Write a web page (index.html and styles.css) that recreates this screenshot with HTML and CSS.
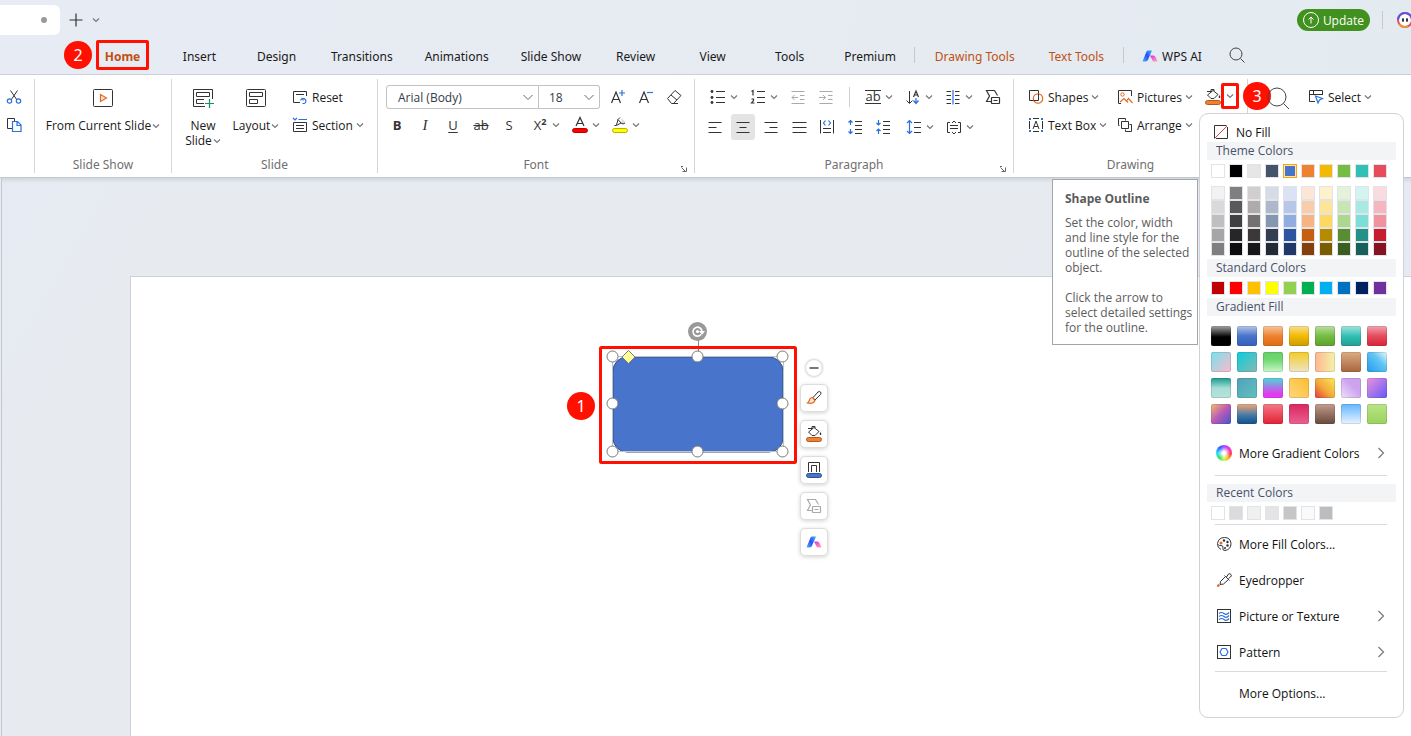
FILE: index.html
```
<!DOCTYPE html>
<html lang="en">
<head>
<meta charset="utf-8">
<title>Presentation editor</title>
<link rel="stylesheet" href="styles.css">
</head>
<body>
<svg class="defs" aria-hidden="true">
  <defs>
    <linearGradient id="g-blue" x1="0" y1="1" x2="1" y2="0"><stop offset="0" stop-color="#3fb4ff"/><stop offset=".5" stop-color="#2b50f5"/><stop offset="1" stop-color="#3ab8f0"/></linearGradient>
    <linearGradient id="g-pink" x1="0" y1="0" x2="1" y2="1"><stop offset="0" stop-color="#a03cf5"/><stop offset=".5" stop-color="#f56ad0"/><stop offset="1" stop-color="#ffb07a"/></linearGradient>
    <symbol id="chev" viewBox="0 0 8 8"><path d="M1 2.500l3 3 3-3" fill="none" stroke="#777" stroke-width="1.200"/></symbol>
    <symbol id="right" viewBox="0 0 8 14"><path d="M1.500 2l5 5-5 5" fill="none" stroke="#777" stroke-width="1.200"/></symbol>
    <symbol id="ai" viewBox="0 0 16 12"><path d="M4.500 1.500Q5 .5 6.200.5H10L6.500 8.500Q6 11.500 3 11.500H.5z" fill="url(#g-blue)"/><path d="M8 5.500h3.500Q13 5.500 13.800 7.500L15.500 11.500h-3.500Q10.500 11.500 10 9.500z" fill="url(#g-pink)"/></symbol>
    <symbol id="bucket" viewBox="0 0 18 18"><path d="M3 3.500H8M3.500 7L9 2.500 14 6.500 10 10.500H7zM7 3V1.500h3V3" fill="none" stroke="#333"/><path d="M15.500 7q1.500 2 .5 3h-1q-1-1 .5-3z" fill="#333"/><rect x="1.500" y="12.500" width="15" height="4" rx="2" fill="#ee8230" stroke="#b5591a"/></symbol>
    <symbol id="cvt" viewBox="0 0 16 16"><path d="M7 12.500H1.500L4.500 7 1.500 1.500h8l3 5" fill="none" stroke="currentColor" stroke-width="1.200"/><rect x="6.500" y="8.500" width="8" height="6" rx=".5" fill="#fff" stroke="currentColor" stroke-width="1.200"/><path d="M8.500 11.500h4" stroke="currentColor"/></symbol>
    <symbol id="glass" viewBox="0 0 16 16"><circle cx="7" cy="7" r="6" fill="none" stroke="#444"/><path d="M11.500 11.500L15.500 15.500" stroke="#444"/></symbol>
    <symbol id="launch" viewBox="0 0 8 8"><path d="M1.500 2.500l4 4M6.500 2.500v4H2.500M1 1.500h2" fill="none" stroke="#666"/></symbol>
  </defs>
</svg>

<header class="titlebar">
  <div class="doc-tab"><span class="dirty"></span></div>
  <button class="tb-btn" aria-label="New tab"><svg width="14" height="14"><path d="M7 .5v13M.5 7h13" stroke="#333" stroke-width="1.200"/></svg></button>
  <button class="tb-btn" aria-label="Tab list"><svg width="8" height="8"><use href="#chev"/></svg></button>
  <div class="spacer"></div>
  <button class="update"><svg width="16" height="16" fill="none" stroke="#fff"><circle cx="8" cy="8" r="7.500"/><path d="M8 11.500v-6M5.500 7.500L8 5l2.500 2.500"/></svg>Update</button>
  <span class="tb-sep"></span>
  <div class="avatar"><svg width="18" height="18"><circle cx="9" cy="9" r="7" fill="#fff" stroke="#e84f63" stroke-width="2"/><path d="M2 9a7 7 0 0 1 14 0" fill="none" stroke="#5b55e6" stroke-width="2"/><path d="M3 13a7 7 0 0 0 9 2" fill="none" stroke="#e79a35" stroke-width="2"/><ellipse cx="7" cy="9" rx="1" ry="2" fill="#222"/><ellipse cx="11" cy="9" rx="1" ry="2" fill="#222"/></svg></div>
</header>

<nav class="tabs">
  <button class="tab active">Home<span class="mark-box"></span><span class="badge badge-two">2</span></button>
  <button class="tab">Insert</button>
  <button class="tab">Design</button>
  <button class="tab">Transitions</button>
  <button class="tab">Animations</button>
  <button class="tab">Slide Show</button>
  <button class="tab">Review</button>
  <button class="tab">View</button>
  <button class="tab">Tools</button>
  <button class="tab">Premium</button>
  <span class="tab-sep"></span>
  <button class="tab context">Drawing Tools</button>
  <button class="tab context">Text Tools</button>
  <span class="tab-sep"></span>
  <button class="ai-tab"><svg width="16" height="12"><use href="#ai"/></svg>WPS AI</button>
  <button class="search" aria-label="Search"><svg width="16" height="16"><use href="#glass"/></svg></button>
</nav>

<section class="ribbon">
  <div class="group g-clip">
    <button class="icon" aria-label="Cut"><svg width="16" height="16" fill="none" stroke="#333"><path d="M4.500 1.500L11 11M11.500 1.500L5 11"/><g stroke="#2b6fe0" stroke-width="1.200"><circle cx="3.500" cy="12" r="2.200"/><circle cx="12.500" cy="12" r="2.200"/></g></svg></button>
    <button class="icon" aria-label="Copy"><svg width="16" height="16" fill="none"><path d="M6 11.500H1.500v-10h7V4" stroke="#333"/><path d="M6.500 4.500h5l3.500 3.500v6.500H6.500zM11 4.500V8.500h4" stroke="#2b6fe0" stroke-width="1.200"/></svg></button>
  </div>

  <div class="group g-show">
    <button class="big"><span class="big-icon"><svg width="20" height="18" fill="none"><rect x=".5" y=".5" width="19" height="17" rx="1" stroke="#333"/><path d="M7.500 5.500v7l6-3.500z" fill="#fde3d2" stroke="#e36a22" stroke-width="1.200"/></svg></span><span class="big-text">From Current Slide<svg width="8" height="8"><use href="#chev"/></svg></span></button>
    <div class="group-name">Slide Show</div>
  </div>

  <div class="group g-slide">
    <div class="slide-tools">
      <button class="big big-new"><span class="big-icon"><svg width="22" height="18" fill="none" stroke="#333"><path d="M13 17.500H1.500V.5h19V10"/><path d="M4.500 3.500h13v4h-13zM12 10.500H4.500v4H12"/><path d="M17.500 10v9M13 14.500h9" stroke="#12906a" stroke-width="1.200"/></svg></span><span class="big-text">New<br>Slide<svg width="8" height="8"><use href="#chev"/></svg></span></button>
      <button class="big big-layout"><span class="big-icon"><svg width="20" height="18" fill="none" stroke="#333"><rect x=".5" y=".5" width="19" height="17" rx="1"/><path d="M3.500 3.500h13v4h-13zM3.500 10.500h8v4h-8z"/></svg></span><span class="big-text">Layout<svg width="8" height="8"><use href="#chev"/></svg></span></button>
      <div class="stack">
        <button class="labelled"><svg width="16" height="16" fill="none"><path d="M8 13.500H1.500v-11h13V7" stroke="#333"/><path d="M4 5.500h8" stroke="#333"/><path d="M8.500 11.500l1.500-2 1.500 2M10 10a2.500 2.500 0 1 1 2 4.500h-1.500" stroke="#2b6fe0" stroke-width="1.200"/></svg>Reset</button>
        <button class="labelled"><svg width="16" height="16" fill="none"><path d="M1 1l2 2 2-2M6.500 2.500H15" stroke="#2b6fe0" stroke-width="1.200"/><path d="M1.500 5.500h13v9h-13zM4 8.500h8M4 11.500h8" stroke="#333"/></svg>Section<svg class="drop" width="8" height="8"><use href="#chev"/></svg></button>
      </div>
    </div>
    <div class="group-name">Slide</div>
  </div>

  <div class="group g-font">
    <div class="row row-combo">
      <div class="combo"><select class="font-name" aria-label="Font"><option>Arial (Body)</option></select><svg width="12" height="12" fill="none"><path d="M1.500 4L6 8.500 10.500 4" stroke="#666"/></svg></div>
      <div class="combo combo-size"><select class="font-size" aria-label="Font size"><option>18</option></select><svg width="12" height="12" fill="none"><path d="M1.500 4L6 8.500 10.500 4" stroke="#666"/></svg></div>
      <button class="icon icon-first" aria-label="Increase font size"><svg width="16" height="16" fill="none"><path d="M1.500 14L6 3l4.500 11M3 10.500h6" stroke="#333" stroke-width="1.200"/><path d="M12 1v6M9 4h6" stroke="#2b6fe0" stroke-width="1.200"/></svg></button>
      <button class="icon" aria-label="Decrease font size"><svg width="16" height="16" fill="none"><path d="M1.500 14L6 3l4.500 11M3 10.500h6" stroke="#333" stroke-width="1.200"/><path d="M9 3.500h6" stroke="#2b6fe0" stroke-width="1.200"/></svg></button>
      <button class="icon" aria-label="Clear formatting"><svg width="16" height="16" fill="none" stroke="#333"><path d="M1.500 9.500l7.500-8 6 5-7.500 8h-2zM5 6l6 5M7 14.500h5"/></svg></button>
    </div>
    <div class="row row-text">
      <button class="icon letter bold">B</button>
      <button class="icon letter italic">I</button>
      <button class="icon letter under">U</button>
      <button class="icon letter strike">ab</button>
      <button class="icon letter">S</button>
      <button class="split gap-left" aria-label="Superscript"><span class="letter">X<sup>2</sup></span><svg class="drop" width="8" height="8"><use href="#chev"/></svg></button>
      <button class="split" aria-label="Font colour"><svg width="16" height="18" fill="none"><path d="M4 10L8 1.500 12 10M5.500 7.500h5" stroke="#333" stroke-width="1.200"/><rect x=".5" y="12.500" width="15" height="4" rx="2" fill="#f00" stroke="#b00"/></svg><svg class="drop" width="8" height="8"><use href="#chev"/></svg></button>
      <button class="split" aria-label="Highlight"><svg width="16" height="18" fill="none"><path d="M9 1.500l4.500 5L10 8z" fill="#ddd"/><path d="M2.500 9.500h2L9 7 6 3.500 4.500 9M6 3.500L8 1.500M9 7l2 1 2-1" stroke="#333"/><rect x=".5" y="12.500" width="15" height="4" rx="2" fill="#ff0" stroke="#b5b500"/></svg><svg class="drop" width="8" height="8"><use href="#chev"/></svg></button>
    </div>
    <div class="group-name">Font</div>
    <button class="launcher" aria-label="Font settings"><svg width="8" height="8"><use href="#launch"/></svg></button>
  </div>

  <div class="group g-para">
    <div class="row">
      <button class="split" aria-label="Bullets"><svg width="16" height="16"><path d="M6 2.500h9M6 8.500h9M6 13.500h9" stroke="#333"/><g fill="#333"><circle cx="2" cy="2.500" r="1.400"/><circle cx="2" cy="8.500" r="1.400"/><circle cx="2" cy="13.500" r="1.400"/></g></svg><svg class="drop" width="8" height="8"><use href="#chev"/></svg></button>
      <button class="split" aria-label="Numbering"><svg width="16" height="16" fill="none" stroke="#333"><path d="M7 2.500h8M7 8.500h8M7 13.500h8"/><path d="M1.500 2.500L3 1.500v5M1.500 10h2v1.500L1.500 14H4.500" stroke-width="1.200"/></svg><svg class="drop" width="8" height="8"><use href="#chev"/></svg></button>
      <button class="icon" aria-label="Decrease indent"><svg width="16" height="16" fill="none" stroke="#aaa"><path d="M1.500 2.500h13M10 6.500h4.500M10 10.500h4.500M1.500 14.500h13M8 8.500H2M4.500 6L2 8.500 4.500 11"/></svg></button>
      <button class="icon" aria-label="Increase indent"><svg width="16" height="16" fill="none" stroke="#aaa"><path d="M1.500 2.500h13M10 6.500h4.500M10 10.500h4.500M1.500 14.500h13M1 8.500h6.500M5 6l2.500 2.500L5 11"/></svg></button>
      <span class="row-sep"></span>
      <button class="split" aria-label="Text direction"><span class="letter over">ab</span><svg class="drop" width="8" height="8"><use href="#chev"/></svg></button>
      <button class="split" aria-label="Sort"><svg width="16" height="16" fill="none"><path d="M4.500 2v12M1.500 11.500l3 3 3-3" stroke="#333"/><path d="M8.500 8l2.500-6 2.500 6M9.500 6h3" stroke="#333" stroke-width="1.200"/><path d="M11 9v5M8.500 11.500l2.500 3 2.500-3" stroke="#2b6fe0" stroke-width="1.200"/></svg><svg class="drop" width="8" height="8"><use href="#chev"/></svg></button>
      <button class="split" aria-label="Columns"><svg width="16" height="16" fill="none"><path d="M1.500 2.500h4.500M1.500 6.500h4.500M1.500 10.500h4.500M1.500 14.500h4.500M10 2.500h4.500M10 6.500h4.500M10 10.500h4.500M10 14.500h4.500" stroke="#333"/><path d="M8 1v14.500" stroke="#2b6fe0" stroke-width="1.200"/></svg><svg class="drop" width="8" height="8"><use href="#chev"/></svg></button>
      <button class="icon" aria-label="Convert to diagram"><svg width="16" height="16"><use href="#cvt"/></svg></button>
    </div>
    <div class="row row-align">
      <button class="icon" aria-label="Align left"><svg width="16" height="16"><path d="M1.500 3.500h13M1.500 8.500h8M1.500 13.500h13" stroke="#333"/></svg></button>
      <button class="icon selected" aria-label="Align center"><svg width="16" height="16"><path d="M1.500 3.500h13M4.500 8.500h7M1.500 13.500h13" stroke="#333"/></svg></button>
      <button class="icon" aria-label="Align right"><svg width="16" height="16"><path d="M1.500 3.500h13M6.500 8.500h8M1.500 13.500h13" stroke="#333"/></svg></button>
      <button class="icon" aria-label="Justify"><svg width="16" height="16"><path d="M1.500 3.500h14M1.500 8.500h14M1.500 13.500h14" stroke="#333"/></svg></button>
      <button class="icon" aria-label="Distribute"><svg width="16" height="16" fill="none"><path d="M1.500 1v13.500M14.500 1v13.500M4 9.500h8M4 13.500h8" stroke="#333"/><path d="M6.500 1.500L4.500 4l2 2.500M9.500 1.500l2 2.500-2 2.500" stroke="#2b6fe0" stroke-width="1.200"/></svg></button>
      <button class="icon" aria-label="Increase paragraph spacing"><svg width="16" height="16" fill="none"><path d="M8 2.500h7M8 6.500h7M8 10.500h7M8 14.500h7" stroke="#333"/><path d="M3.500 1v5M1.500 3.500l2-2 2 2M3.500 10v5M1.500 12.500l2 2 2-2" stroke="#2b6fe0" stroke-width="1.200"/></svg></button>
      <button class="icon" aria-label="Decrease paragraph spacing"><svg width="16" height="16" fill="none"><path d="M8 2.500h7M8 6.500h7M8 10.500h7M8 14.500h7" stroke="#333"/><path d="M3.500 1v5M1.500 4l2 2 2-2M3.500 10v5M1.500 12l2-2 2 2" stroke="#2b6fe0" stroke-width="1.200"/></svg></button>
      <button class="split gap-left" aria-label="Line spacing"><svg width="16" height="16" fill="none"><path d="M8 3.500h7M8 8.500h7M8 13.500h7" stroke="#333"/><path d="M3.500 1.500v13M1 4l2.500-2.500L6 4M1 12l2.500 2.500L6 12" stroke="#2b6fe0" stroke-width="1.200"/></svg><svg class="drop" width="8" height="8"><use href="#chev"/></svg></button>
      <button class="split" aria-label="Align text"><svg width="16" height="16" fill="none" stroke="#333"><path d="M4 3.500H1.500v10H4M12 3.500h2.500v10H12M4 6.500h8M4 9.500h8M6 4l2-2 2 2M6 13l2 2 2-2"/></svg><svg class="drop" width="8" height="8"><use href="#chev"/></svg></button>
    </div>
    <div class="group-name">Paragraph</div>
    <button class="launcher" aria-label="Paragraph settings"><svg width="8" height="8"><use href="#launch"/></svg></button>
  </div>

  <div class="group g-draw">
    <div class="draw-tools">
      <button class="labelled"><svg width="16" height="16" fill="none"><path d="M5 11.500H1.500v-10h9V5" stroke="#333"/><circle cx="10" cy="9.500" r="4.700" stroke="#e36a22" stroke-width="1.200"/><path d="M5.500 11.500h5V5" stroke="#333"/></svg>Shapes<svg class="drop" width="8" height="8"><use href="#chev"/></svg></button>
      <button class="labelled"><svg width="16" height="16" fill="none"><path d="M4 14.500H1.500v-13h13V7" stroke="#333"/><circle cx="5.500" cy="5.500" r="1.700" stroke="#e36a22"/><path d="M3 13L7 9.500l4 4M9.500 12l2-2.500 4 4.500" stroke="#e36a22" stroke-width="1.200"/></svg>Pictures<svg class="drop" width="8" height="8"><use href="#chev"/></svg></button>
      <div class="fill-tool">
        <button class="fill-main" aria-label="Shape fill"><svg width="18" height="18"><use href="#bucket"/></svg></button>
        <button class="fill-drop" aria-label="Fill options"><svg width="8" height="8"><use href="#chev"/></svg><span class="mark-box"></span><span class="badge badge-three">3</span></button>
      </div>
      <button class="labelled"><svg width="16" height="16" fill="none"><path d="M1.500 4v8M14.500 4v8M5 1.500h6M5 14.500h6" stroke="#333"/><path d="M5 12l3-8 3 8M6 9.500h4" stroke="#333"/><path d="M1 1h2v2H1zM13 1h2v2h-2zM1 13h2v2H1zM13 13h2v2h-2z" fill="#2b6fe0"/></svg>Text Box<svg class="drop" width="8" height="8"><use href="#chev"/></svg></button>
      <button class="labelled"><svg width="16" height="16" fill="none" stroke="#333"><path d="M2.500 8.500H1.500v-7h7v2"/><path d="M4.500 4.500h7v7h-7zM8.500 12.500v2h6v-7h-2"/></svg>Arrange<svg class="drop" width="8" height="8"><use href="#chev"/></svg></button>
    </div>
    <div class="group-name">Drawing</div>
  </div>

  <div class="group g-edit">
    <button class="find" aria-label="Find"><svg width="24" height="24" fill="none" stroke="#444"><circle cx="10" cy="11" r="9"/><path d="M16.500 17.500L22 23"/></svg></button>
    <button class="labelled"><svg width="16" height="16" fill="none"><path d="M7 12.500H1.500v-11h13V6M1.500 5.500h13M5.500 1.500v4" stroke="#333"/><path d="M7.500 7l7 2.500-3 1.500-1.500 3z" stroke="#2b6fe0" stroke-width="1.200"/></svg>Select<svg class="drop" width="8" height="8"><use href="#chev"/></svg></button>
  </div>

  <aside class="menu">
    <button class="no-fill"><svg width="14" height="14" fill="none"><path d="M.5 13.500V.5h12M13.500 2v11.500H2" stroke="#333"/><path d="M1 13L13 1" stroke="#e0364a"/></svg>No Fill</button>
    <h3>Theme Colors</h3>
    <div class="swatches" id="theme"></div>
    <div class="shades" id="shades"></div>
    <h3>Standard Colors</h3>
    <div class="swatches" id="standard"></div>
    <h3>Gradient Fill</h3>
    <div class="gradients" id="gradients"></div>
    <button class="item"><span class="wheel"></span>More Gradient Colors<svg class="arrow" width="8" height="14"><use href="#right"/></svg></button>
    <hr>
    <h3>Recent Colors</h3>
    <div class="swatches" id="recent"></div>
    <hr class="tight">
    <button class="item"><svg width="16" height="16" fill="none"><path d="M5 13.500Q1 11.500 1.500 7.500 2.500 1.500 8.500 1.500t6.500 6q0 6-6 7-2.500 0-2-2 .5-3-2-3-2 .5-2.500-1" stroke="#333"/><circle cx="5" cy="7" r="1.500" fill="#e36a22"/><g fill="#333"><circle cx="8" cy="4.500" r="1.200"/><circle cx="11.500" cy="6" r="1.200"/><circle cx="11.500" cy="9.500" r="1.200"/><circle cx="9" cy="12" r="1"/></g></svg>More Fill Colors...</button>
    <button class="item"><svg width="16" height="16" fill="none"><path d="M4 12.500L4.500 9.500 9.500 4.500l3 3-5 4.500zM8.500 3.500l5 5M10.500 5L12.500 2q1.500-1 2.500.5t-.5 2.500l-2 1.500" stroke="#333"/><path d="M1 13l1.500-1 1.500 1.500L2.500 15 1 14.500z" fill="#e36a22"/></svg>Eyedropper</button>
    <button class="item"><svg width="16" height="16" fill="none"><rect x="1.500" y="1.500" width="13" height="13" stroke="#333"/><path d="M3 5.500q2.500-2 5 0t5-1M3 8.500q2.500-2 5 0t5-1M3 11.500q2.500-2 5 0t5-1" stroke="#2b6fe0" stroke-width="1.200"/></svg>Picture or Texture<svg class="arrow" width="8" height="14"><use href="#right"/></svg></button>
    <button class="item"><svg width="16" height="16" fill="none"><rect x="1.500" y="1.500" width="13" height="13" stroke="#333"/><path d="M6 4.500h4L12 8l-2 3.500H6L4 8z" stroke="#2b6fe0" stroke-width="1.200"/></svg>Pattern<svg class="arrow" width="8" height="14"><use href="#right"/></svg></button>
    <hr class="tight">
    <button class="item item-last">More Options...</button>
  </aside>

  <div class="tip" role="tooltip">
    <strong>Shape Outline</strong>
    <p>Set the color, width and line style for the outline of the selected object.</p>
    <p>Click the arrow to select detailed settings for the outline.</p>
  </div>
</section>

<main class="workspace">
  <div class="slide">
    <div class="shape">
      <svg width="198" height="148" fill="none">
        <rect x="14" y="41" width="170" height="95" rx="14" fill="#4874cb" stroke="#2f528f"/>
        <rect x="13.500" y="40.500" width="171" height="95" stroke="#bfc3c9"/>
        <path d="M99.500 24v12" stroke="#888"/>
        <circle cx="98.500" cy="15.500" r="9.500" fill="#999"/>
        <path d="M102 18.500a4.500 4.500 0 1 1 1-3" stroke="#fff" stroke-width="1.600"/><path d="M100 15h6l-3 4z" fill="#fff"/><circle cx="98.500" cy="15.500" r="1.600" fill="#fff"/>
        <rect x="1.500" y="31.500" width="195" height="115" rx="1" stroke="#ff1000" stroke-width="3"/>
        <path d="M29.500 34.500l6.500 6.500-6.500 6.500-6.500-6.500z" fill="#ff9" stroke="#777"/>
        <g fill="#fff" stroke="#777">
          <circle cx="13.500" cy="40.500" r="5.500"/><circle cx="98.500" cy="40.500" r="5.500"/><circle cx="183.500" cy="40.500" r="5.500"/>
          <circle cx="13.500" cy="87.500" r="5.500"/><circle cx="183.500" cy="87.500" r="5.500"/>
          <circle cx="13.500" cy="135.500" r="5.500"/><circle cx="98.500" cy="135.500" r="5.500"/><circle cx="183.500" cy="135.500" r="5.500"/>
        </g>
      </svg>
      <span class="badge badge-one">1</span>
    </div>
    <div class="float-bar">
      <button class="fold" aria-label="Collapse"><svg width="16" height="16"><path d="M3.500 8h9" stroke="#777" stroke-width="2"/></svg></button>
      <button class="float" aria-label="Style"><svg width="16" height="16" fill="none"><path d="M7 7.500L12 2q1.500-1 2.500 0t0 2.500L9 10z" stroke="#333"/><path d="M6.500 7.500q-2.500 0-3 2.500-.5 2-2 3 5.500 1.500 7.500-2.500z" fill="#fdebdc" stroke="#e36a22" stroke-width="1.200"/></svg></button>
      <button class="float" aria-label="Fill"><svg width="18" height="18"><use href="#bucket"/></svg></button>
      <button class="float" aria-label="Outline"><svg width="18" height="18" fill="none"><path d="M3.500 11V1.500h11v9.500M6.500 11V4.500h5V11" stroke="#333"/><rect x="1.500" y="12.500" width="15" height="4" rx="2" fill="#4874cb" stroke="#2f528f"/></svg></button>
      <button class="float muted" aria-label="Convert"><svg width="16" height="16"><use href="#cvt"/></svg></button>
      <button class="float" aria-label="AI"><svg width="16" height="12"><use href="#ai"/></svg></button>
    </div>
  </div>
</main>
<script src="app.js"></script>
</body>
</html>
```
FILE: styles.css
```
* { box-sizing: border-box; }
html, body { height: 100%; }
body {
  margin: 0;
  display: flex;
  flex-direction: column;
  overflow: hidden;
  background: linear-gradient(100deg, #e7ebf3 0%, #e6ebf2 60%, #e2eaf0 100%);
  color: #1a1a1a;
  font: 12px/15px "Open Sans", "Noto Sans", sans-serif;
}
button, select { margin: 0; padding: 0; border: 0; background: none; color: inherit; font: inherit; }
svg { display: block; flex: none; overflow: visible; }
.defs { position: absolute; width: 0; height: 0; }
.spacer { flex: 1; }

/* title bar */
.titlebar { display: flex; align-items: center; height: 40px; }
.doc-tab { display: flex; align-items: center; justify-content: flex-end; width: 60px; height: 30px; padding-right: 13px; border-radius: 0 6px 6px 0; background: #fff; }
.dirty { width: 6px; height: 6px; border-radius: 50%; background: #999; }
.tb-btn { margin-left: 9px; }
.update { display: flex; align-items: center; gap: 4px; height: 22px; padding: 0 6px; border-radius: 11px; background: #41911f; color: #fff; }
.tb-sep { width: 1px; height: 18px; margin: 0 13px 0 12px; background: #c4c9cf; }
.avatar { width: 15px; overflow: hidden; }

/* tabs */
.tabs { display: flex; align-items: center; height: 34px; padding-left: 84px; font-family: "Noto Sans", "Open Sans", sans-serif; }
.tab { position: relative; min-width: 77px; height: 30px; padding: 0 16px 2px; white-space: nowrap; }
.active { color: #c0500f; font-weight: 700; }
.context { padding: 0 17px 2px; color: #c0500f; }
.tab-sep { width: 1px; height: 16px; margin: 0 3px 4px 2px; background: #c4c9cf; }
.ai-tab { display: flex; align-items: center; gap: 4px; height: 30px; margin-left: 15px; padding-bottom: 2px; }
.search { margin: 0 0 4px 27px; }
.mark-box { position: absolute; inset: 0; border: 3px solid #ff1000; border-radius: 2px; }
.tab .mark-box { inset: -2px 12px 2px 12px; }
.badge { position: absolute; width: 28px; height: 28px; border-radius: 50%; background: #ff1000; color: #fff; font-family: "Noto Sans", "Open Sans", sans-serif; font-size: 16px; font-weight: 400; line-height: 28px; text-align: center; }
.badge-two { left: -20px; top: -1px; }
.badge-three { left: 22px; top: -1px; }
.badge-one { left: -32px; top: 76px; }

/* ribbon */
.ribbon { position: relative; z-index: 1; display: flex; height: 104px; padding: 4px 0; border-top: 1px solid #ccd0d5; border-bottom: 1px solid #c3c8ce; background: #fff; }
.group { position: relative; display: flex; flex: none; flex-direction: column; padding-top: 4px; border-right: 1px solid #d4d6d9; }
.group-name { position: absolute; inset: auto 0 0; color: #707070; font-family: "Noto Sans", "Open Sans", sans-serif; line-height: 16px; text-align: center; }
.launcher { position: absolute; right: 6px; bottom: 0; }
.g-clip { width: 35px; }
.g-show { width: 137px; align-items: center; }
.g-slide { width: 206px; }
.g-font { width: 317px; }
.g-para { width: 319px; padding-left: 9px; }
.g-draw { width: 234px; }
.g-edit { flex: 1; flex-direction: row; border: 0; padding-left: 19px; gap: 17px; }
.icon { display: flex; align-items: center; justify-content: center; width: 28px; height: 28px; }
.split { display: flex; align-items: center; width: 40px; height: 28px; padding-left: 6px; }
.split > :first-child { min-width: 16px; }
.drop { margin-left: 4px; }
.big { display: flex; flex-direction: column; align-items: center; }
.big-icon { display: flex; align-items: center; height: 30px; margin-bottom: 5px; }
.big-text { white-space: nowrap; }
.big-text svg { display: inline-block; margin-left: 1px; }
.slide-tools { display: flex; padding-left: 8px; }
.big-new { width: 46px; }
.big-layout { width: 60px; }
.stack { display: flex; flex-direction: column; padding-left: 6px; }
.labelled { display: flex; align-items: center; gap: 4px; height: 28px; white-space: nowrap; }
.labelled .drop { margin-left: 0; }
.row { display: flex; align-items: center; height: 28px; }
.row-text { padding-left: 5px; }
.row-align { margin: 2px 0 0 -3px; }
.row-combo { padding-left: 8px; }
.gap-left { margin-left: 3px; }
.row-sep { width: 1px; height: 20px; margin: 0 9px; background: #d0d0d0; }
.selected { width: 24px; height: 26px; margin: 0 2px; border-radius: 3px; background: #e4e4e4; }
.combo { display: flex; align-items: center; width: 153px; height: 24px; border: 1px solid #c2c2c2; border-radius: 3px 0 0 3px; }
.combo-size { width: 61px; border-left: 0; border-radius: 0 3px 3px 0; }
.combo select { flex: 1; min-width: 0; appearance: none; padding-left: 11px; color: #333a48; }
.combo .font-size { padding-left: 10px; }
.combo svg { margin-right: 4px; }
.icon-first { margin-left: 4px; }
.letter { color: #333; font-size: 13px; }
.bold { font-weight: 700; }
.italic { font-family: "Liberation Serif", serif; font-size: 15px; font-style: italic; }
.under { text-decoration: underline; text-underline-offset: 2px; }
.strike { text-decoration: line-through; }
.letter sup { font-size: 9px; font-weight: 700; line-height: 1px; }
.over { height: 14px; border-top: 1px solid #333; border-bottom: 1px solid #333; line-height: 11px; }
.draw-tools { display: grid; grid-template-columns: 89px 87px 1fr; padding-left: 14px; }
.labelled .drop { margin-left: -1px; }
.fill-tool { display: flex; height: 28px; }
.fill-drop { position: relative; display: flex; align-items: center; justify-content: center; width: 18px; height: 26px; margin-left: -1px; }
.find { align-self: flex-start; margin-top: 3px; }

/* fill menu */
.menu { position: absolute; right: 7px; top: 38px; z-index: 2; display: flex; flex-direction: column; width: 205px; padding: 8px 7px 4px; border: 1px solid #cfd2d8; border-radius: 9px; background: #fff; color: #111; }
.no-fill { display: flex; align-items: center; gap: 8px; height: 20px; padding-left: 7px; }
.menu h3 { margin: 0; padding-left: 9px; background: #f3f4f6; color: #47516a; font-size: 12px; font-weight: 400; line-height: 18px; }
.swatches { display: flex; gap: 4px; padding: 4px 4px 3px; }
.swatch { width: 14px; height: 14px; border: 1px solid #e1e3e8; }
.swatch.on { border-color: #f9a70b; box-shadow: inset 0 0 0 1px #ffe6a8; }
.shades { display: grid; grid-template-columns: repeat(10, 14px); column-gap: 4px; padding: 5px 4px 3px; }
.gradients { display: grid; grid-template-columns: repeat(7, 20px); gap: 6px; padding: 10px 4px 11px; }
.grad { width: 20px; height: 20px; border-radius: 2px; box-shadow: inset 0 0 0 1px rgba(60, 60, 60, .16); }
.menu hr { width: 172px; height: 1px; margin: 4px 8px 8px; border: 0; background: #d9dadd; }
.menu hr.tight { margin: 1px 8px; }
.item { display: flex; align-items: center; gap: 7px; height: 36px; padding: 0 11px 0 9px; text-align: left; }
.arrow { margin-left: auto; }
.wheel { width: 16px; height: 16px; border-radius: 50%; background: radial-gradient(circle, #fff 12%, rgba(255,255,255,0) 55%), conic-gradient(#a050ff, #ff30c0 60deg, #ff4040 100deg, #ffb030 140deg, #c0ff40 180deg, #40e060 220deg, #20e0ff 270deg, #3060ff 320deg, #a050ff); }
.item-last { height: 40px; padding-left: 32px; }

/* tooltip */
.tip { position: absolute; right: 213px; top: 104px; z-index: 3; width: 146px; padding: 11px 2px 9px 12px; border: 1px solid #a5a5a5; background: #fff; color: #5c5c5c; }
.tip strong { display: block; margin-bottom: 9px; }
.tip p { margin: 0; }
.tip p + p { margin-top: 15px; }

/* workspace */
.workspace { display: flex; flex: 1; margin-left: 1px; padding: 98px 0 0 128px; border-left: 1px solid #c3c8ce; background: linear-gradient(#d0d7dd 0, rgba(213,219,225,0) 5px), linear-gradient(120deg, #e6eaf3 0, #e7ebf0 10%, #e7ebf0 60%, #e5e9f3 90%); }
.slide { position: relative; flex: 1; border: 1px solid #cdd2d9; border-width: 1px 0 0 1px; background: #fff; }
.shape { position: absolute; left: 468px; top: 39px; }
.float-bar { position: absolute; left: 669px; top: 83px; display: flex; flex-direction: column; align-items: center; gap: 8px; }
.fold { border-radius: 50%; background: #fff; box-shadow: 0 0 3px rgba(0, 0, 0, .4); }
.float { display: flex; align-items: center; justify-content: center; width: 28px; height: 28px; border: 1px solid #ddd; border-radius: 5px; background: #fff; box-shadow: 0 1px 4px rgba(0, 0, 0, .18); }
.float, .ribbon .icon { color: #333; }
.float.muted { color: #aaa; }
```
FILE: app.js
```
const theme = ['#ffffff', '#000000', '#e7e6e6', '#44546a', '#4874cb', '#ee822f', '#f2ba02', '#75bd42', '#30c0b4', '#e54c5e'];
const shades = [
  ['#f2f2f2', '#7f7f7f', '#d0cece', '#d6dce5', '#dae3f5', '#fce6d5', '#fff1cb', '#e3f2d9', '#d3f4f1', '#fadbdf'],
  ['#d9d9d9', '#595959', '#afabab', '#adb9ca', '#b6c7ea', '#f8cdac', '#fee496', '#c8e5b3', '#a8e9e3', '#f5b7bf'],
  ['#bfbfbf', '#404040', '#767171', '#8497b0', '#91ace0', '#f5b482', '#fed961', '#acd78e', '#7cded6', '#ef949e'],
  ['#a6a6a6', '#262626', '#3b3838', '#333f50', '#2d54a0', '#c65f10', '#b58b01', '#588e31', '#249087', '#c81d31'],
  ['#7f7f7f', '#0d0d0d', '#181717', '#222a35', '#1e386b', '#843f0b', '#795d01', '#3a5f21', '#18605a', '#851321']
];
const standard = ['#c00000', '#ff0000', '#ffc000', '#ffff00', '#92d050', '#00b050', '#00b0f0', '#0070c0', '#002060', '#7030a0'];
const recent = ['#ffffff', '#dbdbdb', '#f0f0f0', '#e4e4e4', '#c6c6c6', '#fafafa', '#bcbcbc'];
const gradients = [
  '180deg, #a5a5a5, #000 55%', '180deg, #b5c5ea, #4874cb 50%, #3460bd', '180deg, #f7c7a0, #ee822f 50%, #dd6b12',
  '180deg, #fae093, #f2ba02 50%, #cc9c00', '180deg, #bbdfa3, #75bd42 50%, #5da02e', '180deg, #a3e5df, #30c0b4 50%, #229d93',
  '180deg, #f3a5af, #e54c5e 50%, #d82338',
  '135deg, #74e2ea, #ffb9cf', '135deg, #04cfe0, #8bb8b1', '180deg, #65d168, #72d872 40%, #c9f7cc', '180deg, #f3cb28, #ece5c7',
  '90deg, #ffb68f, #f4f2aa', '180deg, #dcac84, #a7643c', '45deg, #1f9cee, #63c5f2 60%, #eefaff',
  '180deg, #169b8e, #a9ddd7 50%, #b5e2dd', '135deg, #50a2bb, #60c1bd', '180deg, #4bd8d6, #e538f0 80%', '45deg, #ffd77f, #fdbd2d',
  '45deg, #e8363b, #f2a83a 45%, #f9e95a', '45deg, #eee0fc, #cda2ef 60%', '135deg, #ee92de, #625af6',
  '135deg, #f4bd6b, #b959b8 50%, #3f58c8', '180deg, #f0a878, #3a76a7 60%, #154f86', '180deg, #f47a86, #e31f34',
  '180deg, #d9275f, #ec5f91', '180deg, #c39c8c, #67483a', '180deg, #62b5ff, #e9f3ff', '180deg, #b9e388, #99d35b'
];

function fillWith(id, values, className, toBackground) {
  const host = document.getElementById(id);
  for (const value of values) {
    const cell = document.createElement('button');
    cell.className = className;
    cell.setAttribute('aria-label', value);
    cell.style.background = toBackground(value);
    host.append(cell);
  }
}

const solid = (value) => value;
fillWith('theme', theme, 'swatch', solid);
fillWith('shades', shades.flat(), 'swatch', solid);
fillWith('standard', standard, 'swatch', solid);
fillWith('recent', recent, 'swatch', solid);
fillWith('gradients', gradients, 'grad', (value) => `linear-gradient(${value})`);
document.getElementById('theme').children[4].classList.add('on');
```
